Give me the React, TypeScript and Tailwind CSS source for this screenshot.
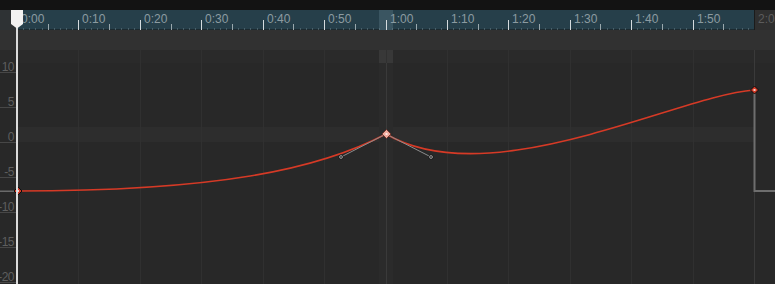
import React from "react";

const STEP = 61.42;
const X0 = 17;
const END = X0 + STEP * 12; // 2:00

const marks = Array.from({ length: 12 }, (_, i) => {
  const total = i * 10;
  return { x: X0 + i * STEP, label: `${Math.floor(total / 60)}:${String(total % 60).padStart(2, "0")}` };
});

// value axis: 7px per unit, 0 sits at y 91.5 inside the graph
const yLabels = [10, 5, 0, -5, -10, -15, -20].map((v) => ({ v, y: 91.5 - v * 7 }));

function Ruler() {
  const dots = Array.from({ length: 121 }, (_, i) => X0 + (i * STEP) / 10);
  return (
    <div className="relative h-[20px] flex bg-[#2e3234]">
      <div className="w-[17px] shrink-0" />
      <div className="w-[737px] shrink-0 bg-[#263f4a] border-b border-[#1c2a30]" />
      <div className="flex-1 bg-[#2f2f2f] border-l border-[#1b1b1b]" />
      <svg className="absolute inset-0" width={775} height={20}>
        <rect x={379} y={0} width={14} height={20} fill="#3a5561" />
        {dots.map((x, i) =>
          i % 10 === 0 ? null : i % 5 === 0 ? (
            <rect key={i} x={Math.round(x)} y={14} width={1} height={6} fill="#9aa8ad" />
          ) : (
            <rect key={i} x={Math.round(x)} y={18.5} width={1} height={1} fill="#6f858e" />
          )
        )}
        {marks.map((m) => (
          <rect key={m.label} x={Math.round(m.x)} y={10} width={1} height={10} fill="#d5dbde" />
        ))}
      </svg>
      {marks.map((m) => (
        <span
          key={m.label}
          className="absolute top-[2px] text-[12px] leading-[14px] text-[#8c9ba1] font-['Liberation_Sans',Arial,sans-serif]"
          style={{ left: Math.round(m.x) + 4 }}
        >
          {m.label}
        </span>
      ))}
      <span
        className="absolute top-[2px] text-[12px] leading-[14px] text-[#5c5c5c] font-['Liberation_Sans',Arial,sans-serif]"
        style={{ left: Math.round(END) + 4 }}
      >
        2:00
      </span>
    </div>
  );
}

function Graph() {
  return (
    <div className="relative flex-1 bg-[#282828] overflow-hidden">
      <svg className="absolute inset-0" width={775} height={234}>
        <rect x={0} y={0} width={775} height={13} fill="#2a2a2a" />
        <rect x={17} y={77} width={737} height={15} fill="#2d2d2d" />
        <rect x={379} y={0} width={14} height={234} fill="#2b2b2b" />
        <rect x={379} y={0} width={14} height={13} fill="#383838" />
        {marks.slice(1).map((m) => (
          <rect key={m.label} x={Math.round(m.x)} y={0} width={1} height={234} fill="#303030" />
        ))}
        <rect x={386} y={13} width={1} height={221} fill="#3a3a3a" />
        <rect x={Math.round(END)} y={0} width={1} height={234} fill="#3a3a3a" />

        {yLabels.map((l) => (
          <rect key={l.v} x={0} y={Math.round(l.y)} width={16} height={1} fill="#474747" />
        ))}
        <rect x={0} y={140.5} width={16} height={1.5} fill="#6a6a6a" />

        {/* gray continuation after last key */}
        <path d="M754.5 40 V141 H775" stroke="#6e6e6e" strokeWidth={2} fill="none" />

        {/* curve */}
        <path
          d="M17 141 C215 141 318 120 386 84 C490 145 680 45 754 40"
          stroke="#d63a26"
          strokeWidth={1.6}
          fill="none"
        />

        {/* handles */}
        <line x1={386} y1={84} x2={341} y2={107} stroke="#8c8c8c" strokeWidth={1} />
        <line x1={386} y1={84} x2={431} y2={107} stroke="#8c8c8c" strokeWidth={1} />
        <circle cx={341} cy={107} r={2.6} fill="#1a1a1a" />
        <circle cx={341} cy={107} r={1.5} fill="#444" stroke="#a0a0a0" strokeWidth={0.8} />
        <circle cx={431} cy={107} r={2.6} fill="#1a1a1a" />
        <circle cx={431} cy={107} r={1.5} fill="#444" stroke="#a0a0a0" strokeWidth={0.8} />

        {/* keys */}
        <path d="M18 137 L22 141 L18 145 L14 141 Z" fill="#d23a27" stroke="#0c0c0c" strokeWidth={1} />
        <rect x={17} y={140} width={2} height={2} fill="#f3d0c8" />
        <path d="M754.5 36 L758.5 40 L754.5 44 L750.5 40 Z" fill="#d23a27" stroke="#0c0c0c" strokeWidth={1} />
        <rect x={753.5} y={39} width={2} height={2} fill="#f3d0c8" />
        <path d="M386.5 79.5 L391 84 L386.5 88.5 L382 84 Z" fill="#f0aa9c" stroke="#6a2a20" strokeWidth={0.8} />
        <rect x={385.5} y={83} width={2} height={2} fill="#fde6e0" />
      </svg>

      {yLabels.map((l) => (
        <span
          key={l.v}
          className="absolute right-[761px] text-[12px] leading-[12px] tracking-[-0.5px] text-[#5e5e5e] font-['Liberation_Sans',Arial,sans-serif] whitespace-nowrap"
          style={{ top: Math.round(l.y) - 11 }}
        >
          {l.v}
        </span>
      ))}
    </div>
  );
}

export default function App() {
  return (
    <div className="relative w-[775px] h-[284px] flex flex-col bg-[#282828] overflow-hidden select-none">
      <div className="h-[10px] bg-[#131313]" />
      <Ruler />
      <div className="h-[20px] bg-[#313131]" />
      <Graph />

      {/* playhead */}
      <div className="absolute left-[16px] top-[24px] bottom-0 w-[2px] bg-[#dcdcdc]" />
      <svg className="absolute left-[11px] top-[10px]" width={12} height={19}>
        <path d="M0 0 H12 V14 L6 18.5 L0 14 Z" fill="#f2f2f2" />
      </svg>
    </div>
  );
}
